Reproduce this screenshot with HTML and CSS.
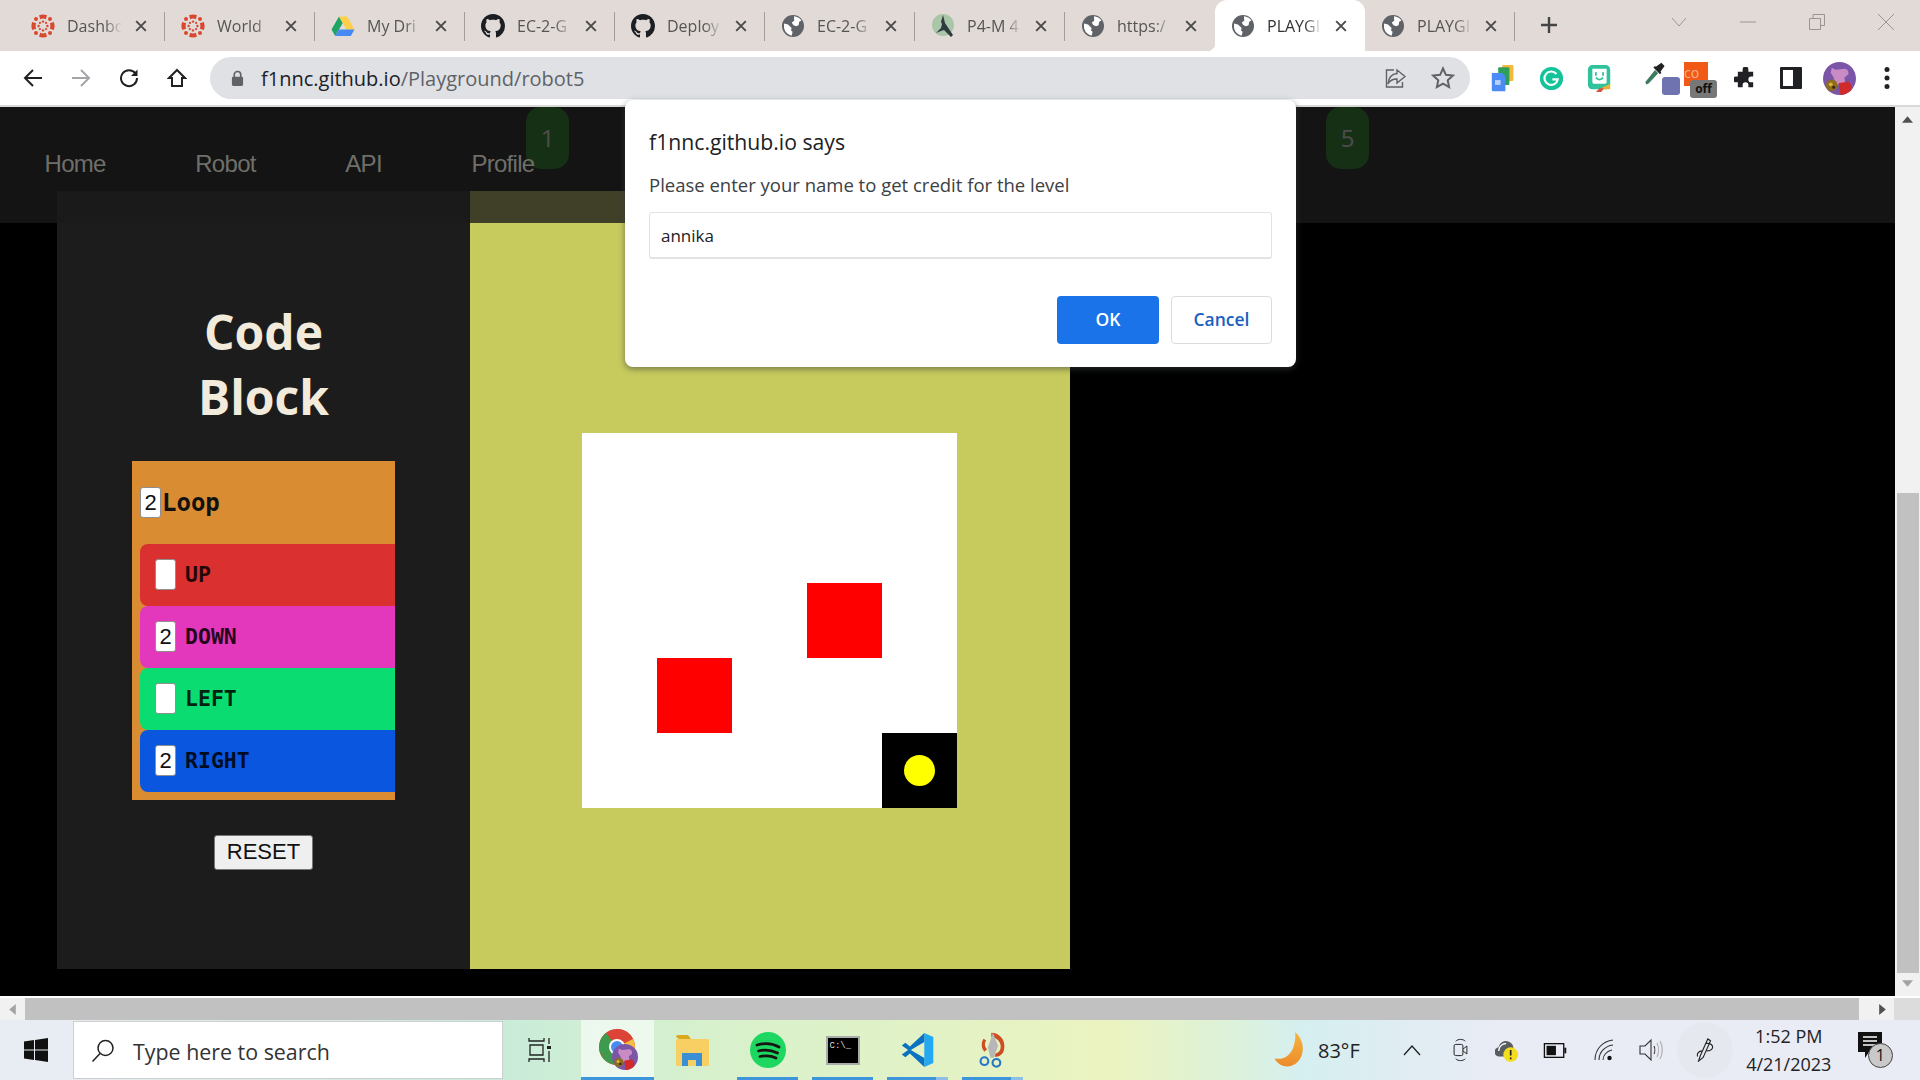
FILE: index.html
```html
<!DOCTYPE html>
<html lang="en">
<head>
  <meta charset="UTF-8">
  <title>PLAYGROUND</title>
  <link rel="stylesheet" href="styles.css">
</head>
<body>
  <!-- shared icons -->
  <svg class="defs" width="0" height="0">
    <symbol id="canvas" viewBox="0 0 24 24">
      <g fill="#d8472f">
        <path d="M8 1.200a11 11 0 0 1 8 0l-1.200 4a7 7 0 0 0-5.600 0z"/>
        <path d="M8 22.800a11 11 0 0 0 8 0l-1.200-4a7 7 0 0 1-5.600 0z"/>
        <path d="M1.200 8a11 11 0 0 0 0 8l4-1.200a7 7 0 0 1 0-5.600z"/>
        <path d="M22.800 8a11 11 0 0 1 0 8l-4-1.200a7 7 0 0 0 0-5.600z"/>
        <circle cx="12" cy="7.600" r="1.200"/><circle cx="12" cy="16.400" r="1.200"/>
        <circle cx="7.600" cy="12" r="1.200"/><circle cx="16.400" cy="12" r="1.200"/>
        <circle cx="5" cy="5" r="2"/><circle cx="19" cy="5" r="2"/>
        <circle cx="5" cy="19" r="2"/><circle cx="19" cy="19" r="2"/>
        <circle cx="8.900" cy="8.900" r="1.100"/><circle cx="15.100" cy="8.900" r="1.100"/>
        <circle cx="8.900" cy="15.100" r="1.100"/><circle cx="15.100" cy="15.100" r="1.100"/>
      </g>
    </symbol>
    <symbol id="github" viewBox="0 0 16 16">
      <path fill="#1b1f23" d="M8 0C3.58 0 0 3.58 0 8c0 3.54 2.29 6.53 5.47 7.59.4.07.55-.17.55-.38 0-.19-.01-.82-.01-1.49-2.01.37-2.53-.49-2.69-.94-.09-.23-.48-.94-.82-1.13-.28-.15-.68-.52-.01-.53.63-.01 1.08.58 1.23.82.72 1.21 1.87.87 2.33.66.07-.52.28-.87.51-1.07-1.78-.2-3.64-.89-3.64-3.95 0-.87.31-1.59.82-2.15-.08-.2-.36-1.02.08-2.12 0 0 .67-.21 2.2.82.64-.18 1.32-.27 2-.27.68 0 1.36.09 2 .27 1.53-1.04 2.2-.82 2.2-.82.44 1.1.16 1.92.08 2.12.51.56.82 1.27.82 2.15 0 3.07-1.87 3.75-3.65 3.95.29.25.54.73.54 1.48 0 1.07-.01 1.93-.01 2.2 0 .21.15.46.55.38A8.013 8.013 0 0016 8c0-4.42-3.58-8-8-8z"/>
    </symbol>
    <symbol id="globe" viewBox="0 0 24 24">
      <circle cx="12" cy="12" r="11" fill="#5f6368"/>
      <path fill="#fff" d="M13 2.200c3 .3 5.800 1.800 7.400 4.200l-2.200 1.400-.6 3.400-2.600 1-2.800-1.200-1.400-2.600 2.400-1.600zM3 9.600l4 1 3.600 3.400-.6 2.400 1.600 1.400-.8 3.800C6.600 21 3.600 17.600 3 13.600z"/>
    </symbol>
    <symbol id="close" viewBox="0 0 16 16">
      <path d="M2.500 2.500l11 11M13.500 2.500l-11 11" stroke="#4a4a4a" stroke-width="2.200" fill="none"/>
    </symbol>
    <symbol id="avatar" viewBox="0 0 34 34">
      <circle cx="17" cy="17" r="17" fill="#7a55a8"/>
      <path fill="#c98bc4" d="M9 6l4 2 9-1c3 0 5 3 4 6l-4 3 1 6-10 2-2-8-3-5z"/>
      <path fill="#d02a2a" d="M16 22l10-2c3 2 4 6 3 9-3 3-7 5-11 5z"/>
      <circle cx="9" cy="24" r="6" fill="#8c6d1f"/>
      <circle cx="8" cy="23" r="2" fill="#d8b13a"/>
      <circle cx="11" cy="26" r="1.600" fill="#3a2a12"/>
    </symbol>
  </svg>

  <div class="tabstrip">
    <div class="tab"><svg class="favicon"><use href="#canvas"/></svg><span class="tab-title">Dashbo</span><svg class="tab-x"><use href="#close"/></svg></div>
    <div class="tab"><svg class="favicon"><use href="#canvas"/></svg><span class="tab-title">World</span><svg class="tab-x"><use href="#close"/></svg></div>
    <div class="tab">
      <svg class="favicon" viewBox="0 0 24 24">
        <path fill="#1fa463" d="M8 2.500h0L.5 15.500l3.700 6.400L11.800 9z"/>
        <path fill="#ffcf47" d="M8 2.500h8l7.500 13h-8z"/>
        <path fill="#4688f4" d="M23.500 15.500l-3.700 6.400H4.200l3.800-6.400z"/>
      </svg>
      <span class="tab-title">My Dri</span><svg class="tab-x"><use href="#close"/></svg>
    </div>
    <div class="tab"><svg class="favicon"><use href="#github"/></svg><span class="tab-title">EC-2-G</span><svg class="tab-x"><use href="#close"/></svg></div>
    <div class="tab"><svg class="favicon"><use href="#github"/></svg><span class="tab-title">Deploy</span><svg class="tab-x"><use href="#close"/></svg></div>
    <div class="tab"><svg class="favicon"><use href="#globe"/></svg><span class="tab-title">EC-2-G</span><svg class="tab-x"><use href="#close"/></svg></div>
    <div class="tab">
      <svg class="favicon" viewBox="0 0 24 24">
        <circle cx="12" cy="11" r="11" fill="#a9c6a8"/>
        <path fill="#2f3a40" d="M12 1l2 8 8 12-2 2-7-7-3 1-5 2 5-5 1-4-1-2z"/>
      </svg>
      <span class="tab-title">P4-M 4</span><svg class="tab-x"><use href="#close"/></svg>
    </div>
    <div class="tab no-sep"><svg class="favicon"><use href="#globe"/></svg><span class="tab-title">https:/</span><svg class="tab-x"><use href="#close"/></svg></div>
    <div class="tab tab-active no-sep"><svg class="favicon"><use href="#globe"/></svg><span class="tab-title">PLAYGI</span><svg class="tab-x"><use href="#close"/></svg></div>
    <div class="tab"><svg class="favicon"><use href="#globe"/></svg><span class="tab-title">PLAYGI</span><svg class="tab-x"><use href="#close"/></svg></div>
    <svg class="new-tab" viewBox="0 0 18 18"><path d="M9 1v16M1 9h16" stroke="#444" stroke-width="2.400"/></svg>
    <div class="win-controls">
      <svg viewBox="0 0 16 16"><path d="M1 4l7 8 7-8" stroke="#9a9594" fill="none"/></svg>
      <svg viewBox="0 0 16 16"><path d="M0 8h16" stroke="#9a9594"/></svg>
      <svg viewBox="0 0 16 16"><path d="M.5 4.500h11v11H.5zM4 4.500V.5h11.500v11H11.500" stroke="#9a9594" fill="none"/></svg>
      <svg viewBox="0 0 16 16"><path d="M0 0l16 16M16 0L0 16" stroke="#9a9594" fill="none"/></svg>
    </div>
  </div>

  <div class="toolbar">
    <div class="nav-btns">
      <svg viewBox="0 0 20 20"><path d="M19 10H2M10 2l-8 8 8 8" stroke="#202124" stroke-width="2" fill="none"/></svg>
      <svg viewBox="0 0 20 20"><path d="M1 10h17M10 2l8 8-8 8" stroke="#a3a5a8" stroke-width="2" fill="none"/></svg>
      <svg viewBox="0 0 20 20"><path d="M16.500 5.500A8 8 0 1 0 18 10" stroke="#202124" stroke-width="2" fill="none"/><path d="M18.500 1.500v6.500H12z" fill="#202124"/></svg>
      <svg viewBox="0 0 20 20"><path d="M2 10l8-8 8 8h-3v8H5v-8z" stroke="#202124" stroke-width="2" fill="none"/></svg>
    </div>
    <div class="omnibox">
      <svg class="lock" viewBox="0 0 14 18"><path d="M3.500 8V5a3.500 3.500 0 0 1 7 0v3" stroke="#5f6368" stroke-width="1.800" fill="none"/><rect x="1" y="7" width="12" height="10" rx="1.500" fill="#5f6368"/></svg>
      <span class="url"><b>f1nnc.github.io</b>/Playground/robot5</span>
      <svg class="omni-icon share" viewBox="0 0 24 24"><path d="M13 4l8 6.500-8 6.500v-4c-4 0-7 1-9 5 .5-5 3-10 9-10.500zM10 4H2.500v17h16v-5" stroke="#5f6368" stroke-width="1.400" fill="none"/></svg>
      <svg class="omni-icon" viewBox="0 0 24 24"><path d="M12 2.500l2.900 6.300 6.900.8-5.100 4.700 1.400 6.800-6.100-3.400-6.100 3.400 1.400-6.800-5.100-4.700 6.900-.8z" stroke="#5f6368" stroke-width="2" fill="none"/></svg>
    </div>
    <div class="extensions">
      <svg class="ext ext-docs" viewBox="0 0 30 36">
        <rect x="14" y="1" width="14" height="20" rx="1.500" fill="#f4b93a"/>
        <rect x="9" y="4" width="14" height="22" rx="1.500" fill="#2f9e58"/>
        <path d="M1 11h13l4 4v19H2.500A1.500 1.500 0 0 1 1 32.500z" fill="#4c8bf5"/>
        <rect x="5" y="20" width="7" height="6" fill="#b9d1fb"/>
      </svg>
      <svg class="ext ext-gram" viewBox="0 0 28 28">
        <circle cx="14" cy="14" r="13" fill="#15c39a"/>
        <path d="M19.500 9A7.500 7.500 0 1 0 21 15h-6" stroke="#fff" stroke-width="2.400" fill="none"/>
      </svg>
      <svg class="ext ext-bit" viewBox="0 0 28 32">
        <rect x="1" y="1" width="25" height="27" rx="5" fill="#2fc29b"/>
        <path d="M6 5h16v15c0 1-1 2-2 2H8c-1 0-2-1-2-2z" fill="#fff"/>
        <path d="M10 9v4M18 9v4M10 15c2 3 6 3 8 0" stroke="#2fc29b" stroke-width="2" fill="none"/>
        <path d="M13 28h13v-6z" fill="#e8b23a"/>
        <path d="M10 31l4-4h5l-3 4z" fill="#d9503f"/>
      </svg>
      <span class="ext dropper">
        <svg viewBox="0 0 26 30"><path d="M2 28l-1-3L13 10l4 4L5 27z" fill="#3d7a5f"/><path d="M14 6l7-5 4 4-5 7 1 2-2 1-8-8 2-2z" fill="#222"/></svg>
        <span class="dropper-swatch"></span>
      </span>
      <span class="ext comoff">
        <span class="com-square">co</span>
        <span class="off-badge">off</span>
      </span>
      <svg class="ext puzzle" viewBox="0 0 24 24"><path fill="#202124" d="M9 2.500a3 3 0 0 1 6 0V5h5v5h-2a3 3 0 0 0 0 6h2v5h-5v-2a3 3 0 0 0-6 0v2H4v-5H2a3 3 0 0 1 0-6h2V5h5z"/></svg>
      <svg class="ext side" viewBox="0 0 22 22"><rect width="22" height="22" rx="1" fill="#202124"/><rect x="3" y="3" width="10" height="16" fill="#fff"/></svg>
      <svg class="ext profile-pic"><use href="#avatar"/></svg>
      <svg class="ext dots" viewBox="0 0 6 24"><circle cx="3" cy="3.500" r="2.500" fill="#202124"/><circle cx="3" cy="12" r="2.500" fill="#202124"/><circle cx="3" cy="20.500" r="2.500" fill="#202124"/></svg>
    </div>
  </div>

  <div class="viewport">
    <div class="page">
      <div class="levels">
        <span class="level">1</span>
        <span class="level">5</span>
      </div>
      <div class="navbar">
        <a class="nav-link">Home</a>
        <a class="nav-link">Robot</a>
        <a class="nav-link">API</a>
        <a class="nav-link">Profile</a>
      </div>

      <div class="code-panel">
        <h1 class="code-title">Code<br>Block</h1>
        <div class="loop">
          <div class="loop-head"><span class="num">2</span>Loop</div>
          <div class="cmd cmd-up"><span class="num"></span>UP</div>
          <div class="cmd cmd-down"><span class="num">2</span>DOWN</div>
          <div class="cmd cmd-left"><span class="num"></span>LEFT</div>
          <div class="cmd cmd-right"><span class="num">2</span>RIGHT</div>
        </div>
        <button class="reset">RESET</button>
      </div>

      <div class="stage">
        <div class="board">
          <div class="wall wall-a"></div>
          <div class="wall wall-b"></div>
          <div class="goal"><div class="ball"></div></div>
        </div>
      </div>

      <div class="dialog">
        <div class="dialog-title">f1nnc.github.io says</div>
        <div class="dialog-msg">Please enter your name to get credit for the level</div>
        <div class="dialog-input">annika</div>
        <div class="dialog-btns">
          <button class="btn-ok">OK</button>
          <button class="btn-cancel">Cancel</button>
        </div>
      </div>
    </div>
    <div class="vscroll">
      <svg class="arrow" viewBox="0 0 10 6"><path d="M5 0l5 6H0z" fill="#505050"/></svg>
      <div class="vthumb"></div>
      <svg class="arrow" viewBox="0 0 10 6"><path d="M5 6l5-6H0z" fill="#a3a3a3"/></svg>
    </div>
  </div>

  <div class="hscroll">
    <svg class="harrow" viewBox="0 0 6 10"><path d="M0 5l6 5V0z" fill="#a3a3a3"/></svg>
    <div class="hthumb"></div>
    <svg class="harrow harrow-end" viewBox="0 0 6 10"><path d="M6 5l-6 5V0z" fill="#505050"/></svg>
    <div class="scroll-corner"></div>
  </div>

  <div class="taskbar">
    <svg class="win-logo" viewBox="0 0 24 24"><path fill="#111" d="M0 3.500l10-1.400V11.500H0zM11 2l13-2v11.500H11zM0 12.500h10v9.400L0 20.500zM11 12.500h13V24l-13-2z"/></svg>
    <div class="search">
      <svg viewBox="0 0 24 24"><circle cx="14.500" cy="9" r="7.500" stroke="#222" stroke-width="1.500" fill="none"/><path d="M9 14.500L1.500 22.500" stroke="#222" stroke-width="1.500"/></svg>
      <span>Type here to search</span>
    </div>
    <svg class="taskview" viewBox="0 0 24 26"><path d="M1 1v3h15V1M1 25v-3h15v3M2 8h13v10H2z" stroke="#222" stroke-width="1.300" fill="none"/><path d="M21 1v6M21 14v11" stroke="#222" stroke-width="1.300"/><rect x="19" y="9" width="4" height="3" fill="#222"/></svg>
    <div class="task-apps">
      <div class="app app-hover app-open">
        <svg class="app-chrome" viewBox="0 0 40 44">
          <circle cx="19" cy="19" r="18" fill="#db4437"/>
          <path d="M19 19L3.500 28A18 18 0 0 1 8 5z" fill="#3d9b4d"/>
          <path d="M19 1a18 18 0 0 1 16 10H19z" fill="#db4437"/>
          <path d="M35 11a18 18 0 0 1-8 24L19 19z" fill="#f4c13d"/>
          <path d="M3.500 28A18 18 0 0 0 27 35L19 19z" fill="#3d9b4d"/>
          <circle cx="19" cy="19" r="8" fill="#fff"/><circle cx="19" cy="19" r="6" fill="#4a8af4"/>
          <use href="#avatar" x="14" y="16" width="26" height="26"/>
        </svg>
      </div>
      <div class="app">
        <svg class="app-files" viewBox="0 0 33 32">
          <path d="M0 3a2 2 0 0 1 2-2h10l3 4H3z" fill="#dba91f"/>
          <rect y="5" width="33" height="27" rx="1.500" fill="#f7cf62"/>
          <path d="M6 32V19h20v13h-6v-6h-8v6z" fill="#3c8fd4"/>
        </svg>
      </div>
      <div class="app app-open">
        <svg viewBox="0 0 36 36">
          <circle cx="18" cy="18" r="18" fill="#1ed760"/>
          <path d="M7 13c7-2 15-2 22 2M8.500 19c6-1.500 13-1 19 2M10 24.500c5-1 11-1 16 1.500" stroke="#191414" stroke-width="2.800" stroke-linecap="round" fill="none"/>
        </svg>
      </div>
      <div class="app app-open">
        <div class="term"><span class="term-text">C:\_</span></div>
      </div>
      <div class="app app-open app-multi">
        <svg viewBox="0 0 36 40">
          <path d="M25 1l10 4.500v29L25 39z" fill="#23a9f2"/>
          <path d="M25 1v10L10 20l15 9v10L9 24 4 28 0 25l7-5-7-5 4-3 5 4z" fill="#0a72c0"/>
        </svg>
      </div>
      <div class="app app-open app-multi">
        <svg viewBox="0 0 34 42">
          <path d="M15 1c10 0 17 9 15 19-1 6-6 9-11 9l1-4c4-1 6-4 6-8 0-6-5-11-11-11z" fill="#cf4d22"/>
          <path d="M6 8c-3 4-3 11 1 15l3-3C7 17 7 13 9 10z" fill="#cf4d22"/>
          <path d="M17 1l6 15-5 14h-4l-3-12z" fill="#b7b7b7"/>
          <circle cx="7" cy="34" r="4.500" stroke="#2878c8" stroke-width="2.500" fill="none"/>
          <circle cx="21" cy="36" r="4.500" stroke="#2878c8" stroke-width="2.500" fill="none"/>
        </svg>
      </div>
    </div>
    <div class="tray">
      <svg class="moon" viewBox="0 0 34 42">
        <defs><linearGradient id="moonfill" x1="0" y1="0" x2="0" y2="1"><stop offset="0" stop-color="#f6b53c"/><stop offset="1" stop-color="#ec8b2c"/></linearGradient></defs>
        <path d="M24 0C35 9 36 26 27 35 19 43 6 42 0 31 12 33 19 26 22 18 24 12 25 5 24 0z" fill="url(#moonfill)"/>
      </svg>
      <span class="temp">83°F</span>
      <svg class="tray-icon chev" viewBox="0 0 18 12"><path d="M1 11l8-9 8 9" stroke="#222" stroke-width="1.300" fill="none"/></svg>
      <svg class="tray-icon meet" viewBox="0 0 18 30"><path d="M3 4c3-3 9-3 12 0M3 26c3 3 9 3 12 0" stroke="#222" stroke-width="1.200" fill="none"/><rect x="1" y="8" width="11" height="14" rx="2" stroke="#222" stroke-width="1.200" fill="none"/><path d="M12 14l5-4v10l-5-4" stroke="#222" stroke-width="1.200" fill="none"/></svg>
      <svg class="tray-icon drive" viewBox="0 0 26 26"><path d="M5 20a5 5 0 0 1-1-10c1-5 6-8 11-6 3 1 5 4 5 7v3l-5 6z" fill="#5a5d60"/><path d="M4 14c0-4 3-8 8-8" stroke="#fff" stroke-width="1.500" fill="none"/><circle cx="17" cy="18" r="8" fill="#f3dd1c"/><path d="M17 13v6M17 21v2" stroke="#222" stroke-width="1.800"/></svg>
      <svg class="tray-icon batt" viewBox="0 0 24 16"><rect x=".7" y=".7" width="20.600" height="14.600" stroke="#111" stroke-width="1.400" fill="none"/><rect x="3" y="3" width="10" height="10" fill="#111"/><rect x="22" y="5" width="2" height="6" fill="#111"/></svg>
      <svg class="tray-icon wifi" viewBox="0 0 20 22"><g stroke="#333" fill="none" stroke-width="1.100"><path d="M1 21C1 10 9 2 19 1"/><path d="M5 21c0-8 6-14 14-15"/><path d="M9 21c0-5 4-9 9-10"/></g><circle cx="15.500" cy="19" r="2.200" fill="#111"/></svg>
      <svg class="tray-icon vol" viewBox="0 0 24 24"><path d="M1 8h5l6-6v20l-6-6H1z" stroke="#333" stroke-width="1.100" fill="none"/><path d="M15 8c1 2 1 6 0 8" stroke="#333" stroke-width="1.100" fill="none"/><path d="M18 5c2 4 2 10 0 14M21 3c3 5 3 13 0 18" stroke="#aaa" stroke-width="1.100" fill="none"/></svg>
      <span class="pen"><svg viewBox="0 0 20 26"><path d="M13 1L5 19l-2 6 5-4 8-18zM11 6c5-1 8 2 7 5s-4 3-6 3M7 14c-4 0-6 3-5 6" stroke="#222" stroke-width="1.200" fill="none"/></svg></span>
      <div class="clock"><span>1:52 PM</span><span>4/21/2023</span></div>
      <div class="notif">
        <svg viewBox="0 0 24 28"><path d="M0 0h24v20H11l-4 6v-6H0z" fill="#111"/><path d="M5 5h14M5 9h14M5 13h14" stroke="#fff" stroke-width="1.400"/></svg>
        <span class="notif-count">1</span>
      </div>
    </div>
  </div>
</body>
</html>
```
FILE: styles.css
```css
* {
  box-sizing: border-box;
}
html, body {
  margin: 0;
  width: 1920px;
  height: 1080px;
  overflow: hidden;
}
body {
  font-family: "Open Sans", sans-serif;
  background-color: #000;
}
.defs {
  position: absolute;
}

/* tab strip */
.tabstrip {
  display: flex;
  height: 51px;
  padding-left: 15px;
  background-color: #e2dad6;
}
.tab {
  position: relative;
  display: flex;
  align-items: center;
  width: 150px;
  padding-left: 16px;
}
.tab::after {
  content: "";
  position: absolute;
  right: 0;
  top: 12px;
  width: 1px;
  height: 29px;
  background-color: #a39c98;
}
.tab.no-sep::after {
  display: none;
}
.favicon {
  flex: none;
  width: 24px;
  height: 24px;
}
.tab-title {
  width: 58px;
  margin-left: 12px;
  overflow: hidden;
  white-space: nowrap;
  font-size: 16px;
  color: #555;
  -webkit-mask-image: linear-gradient(to right, #000 65%, transparent 95%);
  mask-image: linear-gradient(to right, #000 65%, transparent 95%);
}
.tab-x {
  flex: none;
  width: 14px;
  height: 14px;
  margin-left: 9px;
}
.tab-active {
  background-color: #fff;
  border-radius: 12px 12px 0 0;
}
.tab-active .tab-title {
  color: #333;
}
.tab-active::before {
  content: "";
  position: absolute;
  left: -8px;
  bottom: 0;
  width: 8px;
  height: 8px;
  background: radial-gradient(circle at 0 0, transparent 8px, #fff 8.5px);
}
.new-tab {
  width: 18px;
  height: 18px;
  margin: 16px 0 0 25px;
}
.win-controls {
  display: flex;
  gap: 53px;
  margin: 14px 0 0 113px;
}
.win-controls svg {
  width: 16px;
  height: 16px;
}

/* toolbar */
.toolbar {
  display: flex;
  align-items: center;
  height: 56px;
  background-color: #fff;
  border-bottom: 2px solid #d9d9d9;
}
.nav-btns {
  display: flex;
  gap: 28px;
  width: 210px;
  padding-left: 23px;
}
.nav-btns svg {
  width: 20px;
  height: 20px;
}
.omnibox {
  display: flex;
  align-items: center;
  width: 1260px;
  height: 42px;
  padding-left: 21px;
  background-color: #dfe1e5;
  border-radius: 21px;
}
.lock {
  width: 13px;
  height: 17px;
}
.url {
  flex: 1;
  margin-left: 17px;
  font-size: 20px;
  color: #5f6368;
}
.url b {
  font-weight: 400;
  color: #202124;
}
.omni-icon {
  width: 24px;
  height: 24px;
  margin-right: 15px;
}
.omni-icon.share {
  margin-right: 23px;
}
.extensions {
  display: flex;
  align-items: center;
  flex: 1;
}
.ext {
  flex: none;
}
.ext-docs {
  width: 24px;
  height: 29px;
  margin-left: 21px;
}
.ext-gram {
  width: 25px;
  height: 25px;
  margin-left: 24px;
}
.ext-bit {
  width: 25px;
  height: 29px;
  margin-left: 23px;
}
.dropper {
  position: relative;
  width: 40px;
  height: 32px;
  margin-left: 28px;
}
.dropper svg {
  width: 22px;
  height: 24px;
  margin-left: 4px;
}
.dropper-swatch {
  position: absolute;
  right: 0;
  bottom: -1px;
  width: 18px;
  height: 18px;
  border-radius: 3px;
  background-color: #6f73af;
}
.comoff {
  position: relative;
  width: 32px;
  height: 32px;
  margin-left: 4px;
}
.com-square {
  display: block;
  width: 24px;
  height: 24px;
  background-color: #f15a16;
  color: #f8b08c;
  font-size: 14px;
  line-height: 22px;
}
.off-badge {
  position: absolute;
  left: 6px;
  bottom: -4px;
  width: 27px;
  height: 18px;
  border-radius: 3px;
  background-color: #777;
  color: #111;
  font-size: 12px;
  font-weight: 700;
  line-height: 17px;
  text-align: center;
}
.puzzle {
  width: 23px;
  height: 23px;
  margin-left: 18px;
}
.side {
  width: 22px;
  height: 22px;
  margin-left: 23px;
}
.profile-pic {
  width: 33px;
  height: 33px;
  margin-left: 21px;
}
.dots {
  width: 6px;
  height: 24px;
  margin-left: 28px;
}

/* page */
.viewport {
  display: flex;
  height: 889px;
}
.page {
  position: relative;
  display: flex;
  align-items: flex-start;
  width: 1895px;
  padding: 84px 0 0 57px;
  background-color: #000;
}
/* the bar is see-through, the level pills and the panels show under it */
.navbar {
  position: absolute;
  top: 0;
  left: 0;
  right: 0;
  display: flex;
  height: 116px;
  padding-top: 44px;
  background-color: rgba(25, 25, 25, 0.78);
}
.nav-link {
  padding: 0 45px 0 44.500px;
  font-family: "Liberation Sans", sans-serif;
  font-size: 24px;
  letter-spacing: -0.700px;
  line-height: 26px;
  color: #6f6f6a;
}
.levels {
  position: absolute;
  top: 0;
  left: 526px;
  display: flex;
  justify-content: space-between;
  width: 843px;
}
.level {
  width: 43px;
  height: 62px;
  padding-top: 14px;
  border-radius: 15px;
  background-color: #078200;
  color: #fff;
  font-size: 24px;
  line-height: 34px;
  text-align: center;
}
.code-panel {
  display: flex;
  flex-direction: column;
  align-items: center;
  width: 413px;
  height: 778px;
  padding-top: 108px;
  background-color: #1c1c1c;
}
.code-title {
  margin: 0;
  color: #f2ebdc;
  font-size: 48px;
  font-weight: 700;
  line-height: 65px;
  text-align: center;
}
.loop {
  width: 263px;
  height: 339px;
  margin-top: 32px;
  background-color: #d98c32;
}
.loop-head {
  display: flex;
  align-items: center;
  height: 83px;
  padding-left: 8px;
  font-family: "DejaVu Sans Mono", monospace;
  font-size: 24px;
  font-weight: 700;
  color: #111;
}
.num {
  flex: none;
  width: 21px;
  height: 31px;
  margin-right: 1px;
  background-color: #fff;
  border: 1px solid #8f8f8f;
  border-radius: 3px;
  font-family: "Liberation Sans", sans-serif;
  font-size: 22px;
  font-weight: 400;
  line-height: 29px;
  text-align: center;
  color: #111;
}
.cmd {
  display: flex;
  align-items: center;
  height: 62px;
  margin-left: 8px;
  padding: 0 0 1px 15px;
  border-radius: 8px 0 0 8px;
  font-family: "DejaVu Sans Mono", monospace;
  font-size: 21.500px;
  font-weight: 700;
  color: rgba(0, 0, 0, 0.85);
}
.cmd .num {
  margin-right: 9px;
}
.cmd-up { background-color: #db3030; }
.cmd-down { background-color: #e338bc; }
.cmd-left { background-color: #0adc72; }
.cmd-right { background-color: #0b56de; }
.reset {
  width: 99px;
  height: 35px;
  margin-top: 35px;
  padding: 0 0 2px;
  background-color: #efefef;
  border: 1px solid #767676;
  border-radius: 3px;
  font-family: "Liberation Sans", sans-serif;
  font-size: 22px;
  color: #111;
}
.stage {
  width: 600px;
  height: 778px;
  padding: 242px 0 0 112px;
  background-color: #c7ca5c;
}
.board {
  display: grid;
  grid-template-columns: repeat(5, 75px);
  grid-template-rows: repeat(5, 75px);
  width: 375px;
  height: 375px;
  background-color: #fff;
}
.wall {
  background-color: #f00;
}
.wall-a {
  grid-column: 2;
  grid-row: 4;
}
.wall-b {
  grid-column: 4;
  grid-row: 3;
}
.goal {
  display: flex;
  align-items: center;
  justify-content: center;
  grid-column: 5;
  grid-row: 5;
  background-color: #000;
}
.ball {
  width: 31px;
  height: 31px;
  border-radius: 50%;
  background-color: #ff0;
}

/* prompt dialog */
.dialog {
  position: absolute;
  top: -7px;
  left: 625px;
  width: 671px;
  height: 267px;
  padding: 27px 24px 0;
  background-color: #fff;
  border-radius: 8px;
  box-shadow: 0 2px 6px rgba(60, 64, 67, 0.6);
}
.dialog-title {
  font-size: 21.200px;
  line-height: 30px;
  color: #202124;
}
.dialog-msg {
  margin-top: 16px;
  font-size: 18.500px;
  line-height: 24px;
  color: #3c4043;
}
.dialog-input {
  height: 47px;
  margin-top: 15px;
  padding-left: 11px;
  border: 1px solid #e3e3e3;
  border-bottom-width: 2px;
  border-radius: 3px;
  font-size: 17px;
  line-height: 45px;
  color: #202124;
}
.dialog-btns {
  display: flex;
  justify-content: flex-end;
  gap: 12px;
  margin-top: 37px;
}
.btn-ok, .btn-cancel {
  height: 48px;
  padding: 0 0 2px;
  border-radius: 4px;
  font-family: "Open Sans", sans-serif;
  font-size: 17.500px;
  font-weight: 600;
}
.btn-ok {
  width: 102px;
  background-color: #1a73e8;
  border: none;
  color: #fff;
}
.btn-cancel {
  width: 101px;
  background-color: #fff;
  border: 1px solid #dadce0;
  color: #1a5fc0;
}

/* scrollbars */
.vscroll {
  display: flex;
  flex-direction: column;
  align-items: center;
  width: 25px;
  padding-top: 9px;
  background-color: #f1f1f1;
}
.arrow {
  width: 11px;
  height: 7px;
}
.vthumb {
  width: 22px;
  height: 480px;
  margin: 370px 0 7px;
  background-color: #c1c1c1;
}
.hscroll {
  display: flex;
  align-items: center;
  height: 24px;
  background-color: #f1f1f1;
  border-top: 2px solid #fff;
}
.harrow {
  flex: none;
  width: 7px;
  height: 11px;
  margin: 0 9px;
}
.harrow-end {
  margin: 0 8px 0 20px;
}
.hthumb {
  width: 1834px;
  height: 22px;
  background-color: #c1c1c1;
}
.scroll-corner {
  flex: 1;
  height: 22px;
  background-color: #dcdcdc;
}

/* taskbar */
.taskbar {
  display: flex;
  align-items: center;
  height: 60px;
  background: linear-gradient(to right, #e8ecf3 0, #e8ecf3 72px, #c9ecd9 504px, #d8f1cc 720px, #ebf3c0 1110px, #dcf2dc 1240px, #d5eff0 1300px, #e9ebf5 1500px);
}
.win-logo {
  width: 24px;
  height: 24px;
  margin-left: 24px;
}
.search {
  display: flex;
  align-items: center;
  width: 430px;
  height: 58px;
  margin-left: 25px;
  padding: 2px 0 0 17px;
  background-color: #fff;
  border: 1px solid #cfcfcf;
  font-size: 21.400px;
  color: #333;
}
.search svg {
  width: 24px;
  height: 24px;
  margin-right: 18px;
}
.taskview {
  width: 24px;
  height: 26px;
  margin-left: 25px;
}
.task-apps {
  display: flex;
  margin-left: 29px;
}
.app {
  position: relative;
  display: flex;
  align-items: center;
  justify-content: center;
  width: 75px;
  height: 60px;
}
.app svg {
  width: 36px;
  height: 36px;
}
.app svg.app-chrome {
  width: 40px;
  height: 44px;
}
.app svg.app-files {
  width: 33px;
  height: 32px;
}
.app-hover {
  width: 73px;
  margin-right: 1px;
  background-color: rgba(255, 255, 255, 0.6);
}
.app-open::after {
  content: "";
  position: absolute;
  left: 7px;
  right: 7px;
  bottom: 0;
  height: 3px;
  background-color: #3d96dc;
}
.app-hover::after {
  left: 0;
  right: 0;
}
.app-multi::after {
  background: linear-gradient(to right, #3d96dc 49px, #8fbfe6 49px);
}
.term {
  width: 34px;
  height: 29px;
  padding: 3px 2px;
  background-color: #000;
  border: 2px solid #a9adaa;
  overflow: hidden;
}
.term-text {
  display: block;
  font-family: "Liberation Mono", monospace;
  font-size: 9px;
  line-height: 10px;
  color: #ddd;
}
.tray {
  display: flex;
  align-items: center;
  flex: 1;
  margin-left: 242px;
}
.moon {
  width: 34px;
  height: 36px;
}
.temp {
  margin-left: 12px;
  font-size: 20px;
  color: #222;
}
.tray-icon {
  height: 24px;
}
.chev {
  width: 18px;
  height: 12px;
  margin-left: 43px;
}
.meet {
  width: 17px;
  height: 24px;
  margin-left: 31px;
}
.drive {
  width: 24px;
  height: 24px;
  margin-left: 26px;
}
.batt {
  width: 24px;
  height: 15px;
  margin-left: 24px;
}
.wifi {
  width: 20px;
  height: 22px;
  margin-left: 27px;
}
.vol {
  width: 24px;
  height: 24px;
  margin-left: 25px;
}
.pen {
  display: flex;
  align-items: center;
  justify-content: center;
  width: 56px;
  height: 56px;
  margin-left: 14px;
  border-radius: 50%;
  background-color: #e6e8f0;
}
.pen svg {
  width: 20px;
  height: 24px;
}
.clock {
  display: flex;
  flex-direction: column;
  align-items: center;
  gap: 4px;
  width: 90px;
  margin-left: 11px;
  font-size: 18px;
  line-height: 24px;
  color: #222;
}
.notif {
  position: relative;
  width: 24px;
  height: 28px;
  margin: -8px 0 0 24px;
}
.notif svg {
  width: 24px;
  height: 28px;
}
.notif-count {
  position: absolute;
  left: 10px;
  top: 11px;
  width: 25px;
  height: 25px;
  background-color: #c9c9c9;
  border: 1px solid #444;
  border-radius: 50%;
  font-size: 16px;
  line-height: 23px;
  text-align: center;
  color: #111;
}
```
